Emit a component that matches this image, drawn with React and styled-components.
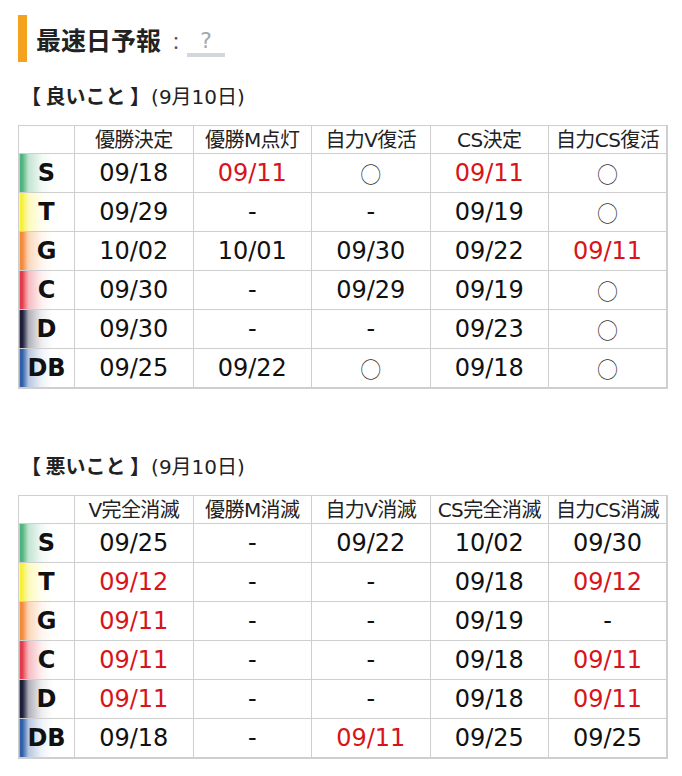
import React from 'react'
import styled, { createGlobalStyle } from 'styled-components'

const GlobalStyle = createGlobalStyle`
  body {
    margin: 0;
    background: #fff;
    font-family: "DejaVu Sans", "Noto Sans CJK JP", sans-serif;
    color: #111;
  }
`

const teamColors = {
  S: '#4fb37f',
  T: '#f7f03a',
  G: '#f28a3a',
  C: '#e23b4e',
  D: '#1d1d3a',
  DB: '#2f5fa8',
}

const good = {
  title: '良いこと',
  cols: ['優勝決定', '優勝M点灯', '自力V復活', 'CS決定', '自力CS復活'],
  rows: [
    ['S', '09/18', '!09/11', '○', '!09/11', '○'],
    ['T', '09/29', '-', '-', '09/19', '○'],
    ['G', '10/02', '10/01', '09/30', '09/22', '!09/11'],
    ['C', '09/30', '-', '09/29', '09/19', '○'],
    ['D', '09/30', '-', '-', '09/23', '○'],
    ['DB', '09/25', '09/22', '○', '09/18', '○'],
  ],
}

const bad = {
  title: '悪いこと',
  cols: ['V完全消滅', '優勝M消滅', '自力V消滅', 'CS完全消滅', '自力CS消滅'],
  rows: [
    ['S', '09/25', '-', '09/22', '10/02', '09/30'],
    ['T', '!09/12', '-', '-', '09/18', '!09/12'],
    ['G', '!09/11', '-', '-', '09/19', '-'],
    ['C', '!09/11', '-', '-', '09/18', '!09/11'],
    ['D', '!09/11', '-', '-', '09/18', '!09/11'],
    ['DB', '09/18', '-', '!09/11', '09/25', '09/25'],
  ],
}

function Forecast({ data, top }) {
  return (
    <Section $top={top}>
      <SubTitle>
        <b>【 {data.title} 】</b>(9月10日)
      </SubTitle>
      <Table>
        <colgroup>
          <col style={{ width: 56 }} />
          {data.cols.map((c) => (
            <col key={c} />
          ))}
        </colgroup>
        <thead>
          <tr>
            <HeadCell />
            {data.cols.map((c) => (
              <HeadCell key={c}>{c}</HeadCell>
            ))}
          </tr>
        </thead>
        <tbody>
          {data.rows.map(([team, ...cells]) => (
            <tr key={team}>
              <TeamCell $color={teamColors[team]}>{team}</TeamCell>
              {cells.map((v, i) => {
                const red = v.startsWith('!')
                return (
                  <Cell key={i} $red={red} $circle={v === '○'}>
                    {red ? v.slice(1) : v}
                  </Cell>
                )
              })}
            </tr>
          ))}
        </tbody>
      </Table>
    </Section>
  )
}

export default function App() {
  return (
    <>
      <GlobalStyle />
      <Page>
        <Heading>
          <Title>最速日予報</Title>
          <Colon>：</Colon>
          <Help>?</Help>
        </Heading>
        <Forecast data={good} top={21} />
        <Forecast data={bad} top={64} />
      </Page>
    </>
  )
}

const Page = styled.div`
  padding: 15px 15px 0 18px;
`

const Heading = styled.div`
  display: flex;
  align-items: center;
  height: 47px;
  border-left: 9px solid #f5a21f;
  padding-left: 9px;
`

const Title = styled.h1`
  margin: 0;
  font-size: 25px;
  font-weight: bold;
  font-family: "Noto Sans CJK JP", sans-serif;
  color: #222;
`

const Colon = styled.span`
  margin-left: 6px;
  margin-top: 6px;
  font-size: 18px;
  color: #555;
  font-family: "Noto Sans CJK JP", sans-serif;
`

const Help = styled.span`
  margin-left: 2px;
  margin-top: 8px;
  width: 38px;
  text-align: center;
  font-size: 22px;
  color: #a3a8ad;
  border-bottom: 4px solid #d3d7db;
  line-height: 24px;
`

const Section = styled.section`
  margin-top: ${(p) => p.$top}px;
`

const SubTitle = styled.div`
  font-size: 20px;
  height: 42px;
  line-height: 26px;
  padding-left: 3px;
  color: #222;
  b {
    font-family: "Noto Sans CJK JP", sans-serif;
    font-weight: bold;
    margin-right: 1px;
  }
`

const Table = styled.table`
  border-collapse: collapse;
  table-layout: fixed;
  width: 650px;
  line-height: 1;
  border-right: 2px solid #cfcfcf;
  border-bottom: 2px solid #cfcfcf;

  td, th {
    border: 1px solid #cfcfcf;
    padding: 0;
    text-align: center;
    white-space: nowrap;
  }
`

const HeadCell = styled.th`
  height: 27px;
  font-weight: normal;
  font-size: 20px;
  font-family: "DejaVu Sans", "Noto Sans CJK JP", sans-serif;
  letter-spacing: -0.6px;
  color: #222;
`

const TeamCell = styled.td`
  height: 38px;
  font-size: 24px;
  font-weight: bold;
  color: #111;
  background: linear-gradient(
    to right,
    ${(p) => p.$color} 0,
    ${(p) => p.$color} 3px,
    color-mix(in srgb, ${(p) => p.$color} 35%, #fff) 9px,
    color-mix(in srgb, ${(p) => p.$color} 8%, #fff) 22px,
    #fff 60%
  );
`

const Cell = styled.td`
  height: 38px;
  font-size: ${(p) => (p.$circle ? 21 : 24)}px;
  font-family: ${(p) =>
    p.$circle ? '"Noto Sans CJK JP", sans-serif' : 'inherit'};
  font-weight: ${(p) => (p.$circle ? 300 : 'normal')};
  color: ${(p) => (p.$red ? '#d7141a' : p.$circle ? '#333' : '#111')};
`
